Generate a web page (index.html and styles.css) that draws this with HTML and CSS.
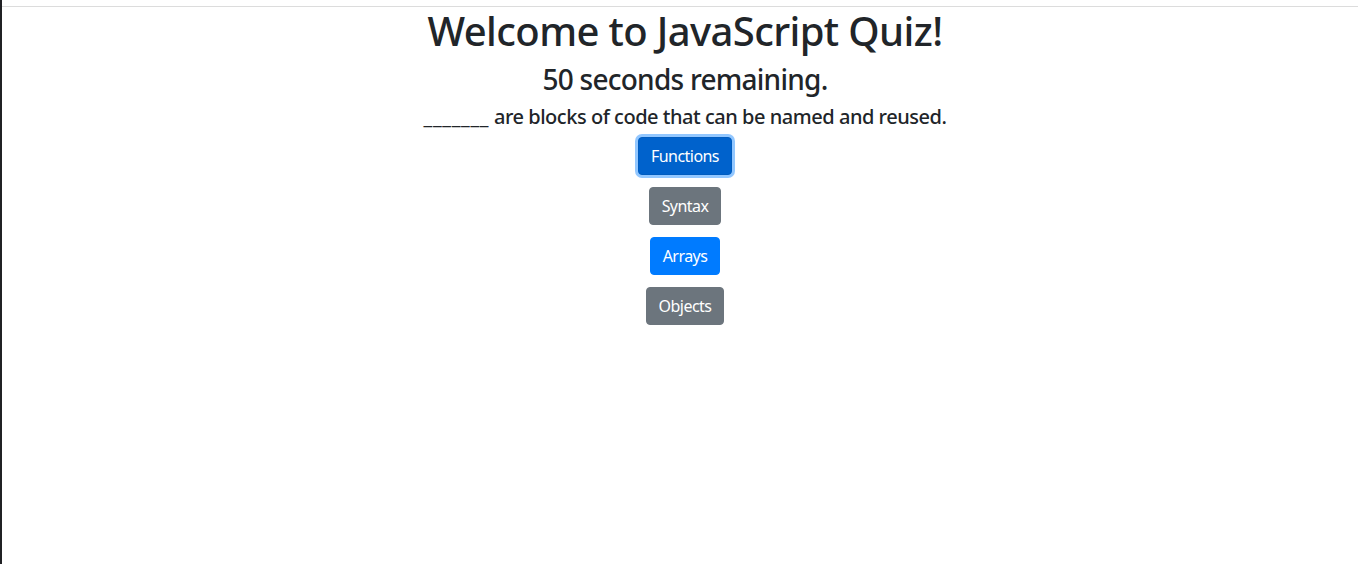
FILE: index.html
```html
<!DOCTYPE html>
<html lang="en">
<head>
<meta charset="utf-8">
<title>JavaScript Quiz</title>
<link rel="stylesheet" href="styles.css">
</head>
<body>
<div class="page">
  <header class="topbar"></header>
  <main class="quiz">
    <h1 class="title">Welcome to JavaScript Quiz!</h1>
    <h3 class="timer">50 seconds remaining.</h3>
    <h5 class="question"><span class="blank">_______</span> are blocks of code that can be named and reused.</h5>
    <div class="answers">
      <button class="btn btn-primary is-focused">Functions</button>
      <button class="btn btn-secondary">Syntax</button>
      <button class="btn btn-primary">Arrays</button>
      <button class="btn btn-secondary">Objects</button>
    </div>
  </main>
</div>
</body>
</html>
```
FILE: styles.css
```css
html, body {
  margin: 0;
  padding: 0;
  height: 100%;
  background: #fff;
}
body {
  font-family: "Noto Sans", "Open Sans", Arial, sans-serif;
  font-size: 16px;
  line-height: 1.5;
  color: #212529;
}
.page {
  min-height: 100%;
  border-left: 2px solid #202124;
  box-sizing: border-box;
}
.topbar {
  height: 6px;
  border-bottom: 1px solid #dcdcdc;
  margin-right: 1px;
}
.quiz {
  text-align: center;
  padding-left: 9px;
}
.title {
  margin: 0 0 8px;
  font-size: 40px;
  font-weight: 500;
  line-height: 1.2;
  letter-spacing: -0.62px;
}
.timer {
  margin: 0 0 8px;
  font-size: 28px;
  font-weight: 500;
  line-height: 1.2;
  letter-spacing: -0.75px;
}
.question {
  margin: 0 0 8px;
  font-size: 20px;
  font-weight: 500;
  line-height: 1.2;
  letter-spacing: -0.47px;
}
.blank {
  letter-spacing: 0.7px;
}
.answers {
  display: flex;
  flex-direction: column;
  align-items: center;
  gap: 12px;
}
.btn {
  font-family: inherit;
  font-size: 16px;
  line-height: 1.5;
  padding: 6px 12px;
  border: 1px solid transparent;
  border-radius: 4px;
  color: #fff;
  letter-spacing: -0.55px;
  cursor: pointer;
}
.btn-primary {
  background: #007bff;
  border-color: #007bff;
}
.btn-secondary {
  background: #6c757d;
  border-color: #6c757d;
}
.is-focused {
  background: #0062cc;
  border-color: #005cbf;
  box-shadow: 0 0 0 3px rgba(38, 143, 255, 0.5);
}
```
